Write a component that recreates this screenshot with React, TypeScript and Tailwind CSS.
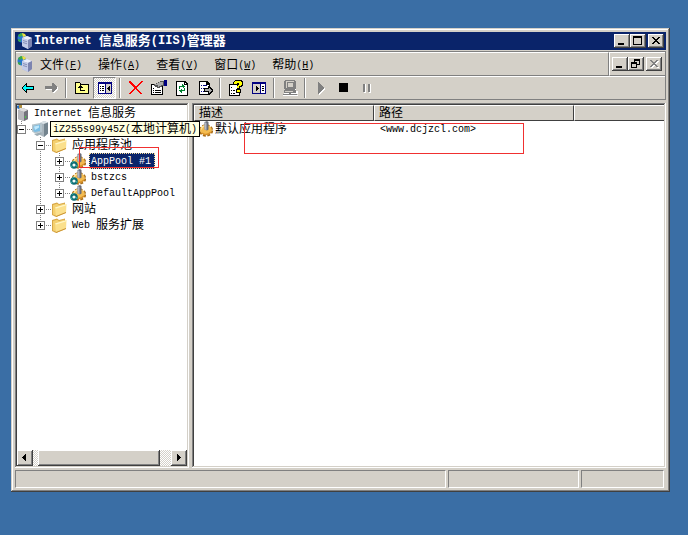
import type { ReactNode } from "react";

const raised =
  "bg-[#d4d0c8] shadow-[inset_-1px_-1px_#404040,inset_1px_1px_#fff,inset_-2px_-2px_#808080]";
const sunken =
  "p-0.5 shadow-[inset_-1px_-1px_#fff,inset_1px_1px_#808080,inset_-2px_-2px_#d4d0c8,inset_2px_2px_#404040]";
const dither =
  "bg-[repeating-conic-gradient(#fff_0_25%,#d4d0c8_0_50%)] bg-[length:2px_2px]";

// Latin runs are set smaller so that they take half the width of a CJK glyph
function Label({ text, bold = false }: { text: string; bold?: boolean }) {
  const cjk = bold
    ? "align-[-1px] text-[13px] leading-none"
    : "align-[-1px] text-[12px] leading-none";
  const latin = bold ? "text-[12px]" : "text-[10px]";
  return (
    <span className="whitespace-pre">
      {text.split(/([\u3000-\u9fff]+)/).map((part, i) =>
        part ? (
          <span key={i} className={i % 2 ? cjk : latin}>
            {part}
          </span>
        ) : null,
      )}
    </span>
  );
}

function Icon({ children, smooth = false }: { children: ReactNode; smooth?: boolean }) {
  return (
    <svg
      width="16"
      height="16"
      viewBox="0 0 16 16"
      className="block shrink-0"
      shapeRendering={smooth ? "auto" : "crispEdges"}
      aria-hidden="true"
    >
      {children}
    </svg>
  );
}

function ServerIcon() {
  return (
    <Icon smooth>
      <circle cx="5" cy="5" r="4.5" fill="#2878d0" />
      <path d="M1 2l3-2 3 1-2 2-3 1zM1 6l3 1-1 2-2-1z" fill="#38a848" />
      <path d="M5 0l3 1 1 2-3 1z" fill="#f0e040" />
      <path d="M5 5l5-2 5 2v8l-4 3-6-3z" fill="#a8b0d0" />
      <path d="M5 5l5-2 5 2-4 2z" fill="#eceffc" />
      <path d="M5 5l6 2v9l-6-3z" fill="#c4cce8" />
      <path d="M11 7l4-2v8l-4 3z" fill="#7c84b0" />
      <path d="M6 7l4 1.300v1L6 8zM6 9l4 1.300v1L6 10z" fill="#8890b8" />
    </Icon>
  );
}

function RootIcon() {
  return (
    <Icon smooth>
      <path d="M5 5l5-2 5 2v9l-4 2-6-2z" fill="#989898" />
      <path d="M5 5l5-2 5 2-4 2z" fill="#dcdcdc" />
      <path d="M5 5l6 2v9l-6-2z" fill="#b8b8bc" />
      <path d="M11 7l4-2v9l-4 2z" fill="#74747c" />
      <path d="M3 1l4-1 1 3-3 1z" fill="#2870c0" />
      <path d="M6 0h3v3H6z" fill="#b09040" />
      <path d="M12 11h1v2h-1z" fill="#4c4" />
    </Icon>
  );
}

function ComputerIcon() {
  return (
    <Icon smooth>
      <path d="M8 2l4-2 4 1.500v11L12 16l-4-2z" fill="#a8b4bc" />
      <path d="M8 2l4-2 4 1.500L12 3z" fill="#dce4e8" />
      <path d="M12 3l4-1.500v11L12 16z" fill="#74848e" />
      <path d="M0 3.500L8 2l2 1v8l-7 1.500-3-2z" fill="#b4c4cc" />
      <path d="M1.500 5L8 3.500v6.500L3 11l-1.500-1z" fill="#78bce4" />
      <path d="M2 5.500l5-1v2L3 9z" fill="#c0e8fc" />
      <path d="M2 13l6-1.500 2 1.500-5 2z" fill="#9cacb4" />
    </Icon>
  );
}

function FolderIcon() {
  return (
    <Icon smooth>
      <path d="M1 3l5-1.500L8 3l6-1.500V12l-9 4-4-2z" fill="#d8a848" />
      <path d="M2 4l4-1.200L8 4l5-1.200V11l-8 3.500-3-1z" fill="#f4d070" />
      <path d="M4 6.500L15.500 3 15 12l-10 4z" fill="#fbe08c" />
      <path d="M4 6.500L15.500 3v1.200L5 7.500z" fill="#fff6c8" />
      <path d="M5 15l10-4v1L5 16z" fill="#c89030" />
    </Icon>
  );
}

function Gear() {
  return (
    <>
      <ellipse
        cx="8"
        cy="9.500"
        rx="5.600"
        ry="4.600"
        fill="#f0b448"
        stroke="#a86c18"
        strokeWidth="3.200"
        strokeDasharray="2.600 1.400"
      />
      <ellipse cx="8" cy="9" rx="5.800" ry="4.800" fill="#f4bc50" />
      <path d="M3 8.500q1.500-4 5-3.800" fill="none" stroke="#ffe098" strokeWidth="1.500" />
      <path d="M4 12q4 3.500 9-1" fill="none" stroke="#d89028" strokeWidth="1.500" />
      <path d="M6.500 1L9 0l1.500 1v7.500L9 9.500l-2.500-1z" fill="#686c78" />
      <path d="M6.500 1L8.500 2v7l-2-.5z" fill="#b4b8c4" />
    </>
  );
}

function GearIcon() {
  return (
    <Icon smooth>
      <Gear />
    </Icon>
  );
}

function PoolIcon() {
  return (
    <Icon smooth>
      <g transform="translate(1 0)">
        <Gear />
      </g>
      <circle cx="4" cy="12" r="2.700" fill="#f4fcf8" stroke="#0c6c74" strokeWidth="2.200" />
      <path d="M2 9.500l2-1.500M6.500 12l.5 2M2 14.500l-1-2" stroke="#38b0a4" />
    </Icon>
  );
}

const toolIcons: Record<string, ReactNode> = {
  后退: (
    <>
      <path d="M2 8l5-4v3h7v3H7v3z" fill="#0ff" />
      <path
        d="M6 3h1v3h7v1H6V5H5V4h1zM4 5h1v1H4zM3 6h1v1H3zM2 7h1v1H2zM2 8h1v1H2zM3 9h1v1H3zM4 10h1v1H4zM5 11h1v1H5zM6 9h8v1H7v3H6zM13 7h1v2h-1z"
        fill="#000"
      />
    </>
  ),
  前进: (
    <>
      <path d="M3 7h7V4h1l4 4v1l-4 4h-1v-3H3z" fill="#fff" />
      <path d="M2 6h7V3h1l4 4v1l-4 4H9V9H2z" fill="#808080" />
    </>
  ),
  向上: (
    <>
      <path d="M1 2h5v1h1v1h8v10H1z" fill="#000" />
      <path d="M2 3h4v2h8v8H2z" fill="#ffff8c" />
      <path d="M6 5h1v1h1v1h1v1H7v2h4v1H6V8H4V7h1V6h1z" fill="#000" />
    </>
  ),
  "显示/隐藏控制台树": (
    <>
      <path d="M1 2h14v12H1z" fill="#000080" />
      <path d="M2 4h6v9H2z" fill="#fff" />
      <path d="M9 4h5v9H9z" fill="#d4d0c8" />
      <path d="M3 6h1v1H3zM5 6h2v1H5zM3 8h1v1H3zM5 8h2v1H5zM3 10h1v1H3zM5 10h2v1H5z" fill="#000" />
      <path d="M12 6h1v5h-1v-1h-1V9h-1V8h1V7h1z" fill="#000" />
    </>
  ),
  删除: (
    <path
      d="M1 1h2v1h1v1h1v1h1v1h1v1h2V5h1V4h1V3h1V2h1V1h2v1h-1v1h-1v1h-1v1h-1v1h-1v1H9v2h1v1h1v1h1v1h1v1h1v1h-2v-1h-1v-1h-1v-1H9v-1H8V9H7v1H6v1H5v1H4v1H3v1H1v-1h1v-1h1v-1h1v-1h1V9h1V7H5V6H4V5H3V4H2V3H1z"
      fill="#f00"
    />
  ),
  属性: (
    <>
      <path d="M0 4h12v11H0z" fill="#000" />
      <path d="M1 5h10v9H1z" fill="#fff" />
      <path d="M2 8h1v1H2zM2 10h1v1H2zM2 12h1v1H2zM4 10h6v1H4zM4 12h6v1H4z" fill="#000" />
      <path d="M3 4h2V3h2V2h2V1h4v5h-2v1H9v1H6V7H4V6H3z" fill="#555" />
      <path d="M4 4h2V3h2V2h4v3h-2v1H8v1H7V5H4z" fill="#aaa" />
      <path d="M13 0h3v6h-3z" fill="#000080" />
    </>
  ),
  刷新: (
    <>
      <path d="M2 1h9l3 3v12H2z" fill="#000" />
      <path d="M3 2h7v3h3v10H3z" fill="#fff" />
      <path d="M11 3h1v1h-1z" fill="#fff" />
      <path
        d="M8 4h1v1h1v1h1v1h-1v1H9V7H6v2H5V6h3zM7 9h1v1h2V8h1v3H8v2H7v-1H6v-1H5v-1h2z"
        fill="#008030"
      />
    </>
  ),
  导出列表: (
    <>
      <path d="M2 1h8l3 3v11H2z" fill="#000" />
      <path d="M3 2h6v3h3v9H3z" fill="#fff" />
      <path d="M4 5h1v1H4zM4 8h1v1H4zM4 11h1v1H4zM6 5h4v1H6zM6 8h2v1H6zM6 11h2v1H6z" fill="#000080" />
      <path d="M7 8h4V6h1l4 4v1l-4 4h-1v-3H7z" fill="#000" />
      <path d="M8 9h4V8l3 2-3 3v-2H8z" fill="#aaa" />
    </>
  ),
  帮助: (
    <>
      <path d="M1 4h11v12H1z" fill="#000" />
      <path d="M2 5h9v10H2z" fill="#fff" />
      <path d="M3 7h1v1H3zM3 10h1v1H3zM3 13h1v1H3zM5 10h2v1H5zM5 13h2v1H5z" fill="#000" />
      <path d="M7 0h7v1h1v5h-1v1h-2v2h1v4H8V9h1V5h1V4H9v1H5V2h1V1h1z" fill="#000" />
      <path d="M7 1h6v1h1v3h-1v1h-2v2H9V6h1V5h1V3H9v1H6V2h1zM9 10h3v2H9z" fill="#ff0" />
    </>
  ),
  "显示/隐藏操作窗格": (
    <>
      <path d="M1 2h14v12H1z" fill="#000080" />
      <path d="M2 4h7v9H2z" fill="#d4d0c8" />
      <path d="M10 4h4v9h-4z" fill="#fff" />
      <path d="M11 6h2v1h-2zM11 8h2v1h-2zM11 10h2v1h-2z" fill="#000" />
      <path d="M5 6h1v1h1v1h1v1H7v1H6v1H5z" fill="#000" />
    </>
  ),
  连接: (
    <>
      <path d="M4 1h10v9H4zM2 11h14v3h-4v1h4v1H1v-1h6v-1H2z" fill="#fff" />
      <path d="M3 0h10v1h1v8h-1v1h1v3H9v1h6v1H1v-1h6v-1H2v-3h1V9H2V1h1z" fill="#808080" />
      <path d="M4 1h8v1H4zM4 2h1v6H4zM6 3h5v4H6zM3 11h8v1H3z" fill="#d4d0c8" />
    </>
  ),
  启动: (
    <>
      <path d="M6 3l6 6-6 6z" fill="#fff" />
      <path d="M5 2h1v1h1v1h1v1h1v1h1v1h1v2h-1v1H9v1H8v1H7v1H6v1H5z" fill="#808080" />
    </>
  ),
  停止: <path d="M3 3h9v9H3z" fill="#000" />,
  暂停: (
    <>
      <path d="M5 4h2v9H5zM10 4h2v9h-2z" fill="#fff" />
      <path d="M4 4h2v8H4zM9 4h2v8H9z" fill="#808080" />
    </>
  ),
};

const toolGroups = [
  ["后退", "前进"],
  ["向上", "显示/隐藏控制台树"],
  ["删除", "属性", "刷新", "导出列表"],
  ["帮助", "显示/隐藏操作窗格"],
  ["连接"],
  ["启动", "停止", "暂停"],
];

function Toolbar() {
  return (
    <div className="flex h-6 items-center border-y border-t-white border-b-[#808080]">
      {toolGroups.map((group, i) => (
        <div key={i} className="flex items-center">
          {i > 0 && (
            <div className="mx-[3px] h-5 w-0.5 border-l border-r border-l-[#808080] border-r-white" />
          )}
          {group.map((name) => (
            <button
              key={name}
              aria-label={name}
              className={
                name === "显示/隐藏控制台树"
                  ? `flex h-[22px] w-[23px] items-center justify-center border border-t-[#808080] border-r-white border-b-white border-l-[#808080] ${dither}`
                  : "flex h-[22px] w-[23px] items-center justify-center"
              }
            >
              <Icon>{toolIcons[name]}</Icon>
            </button>
          ))}
        </div>
      ))}
    </div>
  );
}

const captionGlyphs = {
  最小化: <path d="M4 9h6v2H4z" fill="#000" />,
  最大化: <path d="M3 2h9v9H3zM4 4v6h7V4z" fill="#000" fillRule="evenodd" />,
  还原: (
    <path
      d="M6 2h6v6H9v3H3V5h3zM7 4v1h2v2h2V4zM4 7v3h4V7z"
      fill="#000"
      fillRule="evenodd"
    />
  ),
  关闭: (
    <path
      d="M4 3h2v1h1v1h2V4h1V3h2v1h-1v1h-1v1H9v1h1v1h1v1h1v1h-2V9H9V8H7v1H6v1H4V9h1V8h1V7h1V6H6V5H5V4H4z"
      fill="currentColor"
    />
  ),
};

function CaptionButton({
  name,
  disabled = false,
}: {
  name: keyof typeof captionGlyphs;
  disabled?: boolean;
}) {
  return (
    <button
      aria-label={name}
      disabled={disabled}
      className={`h-3.5 w-4 text-black disabled:text-[#808080] ${raised}`}
    >
      <svg width="16" height="14" viewBox="0 0 16 14" shapeRendering="crispEdges" className="block">
        {disabled && (
          <g transform="translate(1 1)" className="text-white">
            {captionGlyphs[name]}
          </g>
        )}
        {captionGlyphs[name]}
      </svg>
    </button>
  );
}

const menus = [
  ["文件", "F"],
  ["操作", "A"],
  ["查看", "V"],
  ["窗口", "W"],
  ["帮助", "H"],
];

function MenuBar() {
  return (
    <div className="flex h-[25px] border-t border-t-[#808080]">
      <div className="flex flex-1 items-center border-t border-r border-t-white border-r-[#808080] border-b border-b-[#808080] pl-px">
        <ServerIcon />
        <nav className="flex gap-4 pt-px pl-[7px]">
          {menus.map(([name, key]) => (
            <button key={key} className="h-4">
              <Label text={name} />
              <span className="text-[10px]">
                (<u>{key}</u>)
              </span>
            </button>
          ))}
        </nav>
      </div>
      <div className="flex items-center border-t border-b border-l border-t-white border-b-[#808080] border-l-white pr-[3px] pl-0.5">
        <CaptionButton name="最小化" />
        <CaptionButton name="还原" />
        <div className="w-0.5" />
        <CaptionButton name="关闭" disabled />
      </div>
    </div>
  );
}

// Dotted connector cell: a through line, a branch, and the expander box on it
function Branch({ node, last }: { node?: "+" | "-"; last?: boolean }) {
  return (
    <svg width="19" height="16" className="block shrink-0" shapeRendering="crispEdges">
      <path
        d={last ? "M8.5 0V8" : "M8.5 0V16"}
        stroke="#808080"
        strokeDasharray="1 1"
      />
      {node && (
        <>
          <path d="M8 8.5H19" stroke="#808080" strokeDasharray="1 1" />
          <rect x="4.5" y="4.5" width="8" height="8" fill="#fff" stroke="#808080" />
          <path d={node === "+" ? "M6 8.5h5M8.5 6v5" : "M6 8.5h5"} stroke="#000" />
        </>
      )}
    </svg>
  );
}

function TreeRow({
  branches,
  icon,
  text,
  variant = "plain",
}: {
  branches?: ReactNode;
  icon: ReactNode;
  text: string;
  variant?: "plain" | "selected" | "tip";
}) {
  const styles = {
    plain: "ml-[3px] h-4 px-0.5",
    selected:
      "ml-[3px] h-4 bg-[#0a246a] pr-1 pl-0.5 text-white outline-1 -outline-offset-1 outline-dotted outline-[#f5db95]",
    tip: "z-10 ml-0.5 h-4 w-[150px] shrink-0 border border-black bg-[#ffffe1] pl-0.5 leading-[14px]",
  };
  return (
    <li className="flex h-4 items-center">
      {branches}
      {icon}
      <span className={styles[variant]}>
        <Label text={text} />
      </span>
    </li>
  );
}

function Tree() {
  const gap = <div className="w-[19px] shrink-0" />;
  const pool = (last = false) => (
    <>
      {gap}
      <Branch />
      <Branch node="+" last={last} />
    </>
  );
  return (
    <div className="relative flex-1">
      {/* only the left edge clips, the name tip runs out over the splitter */}
      <ul className="-ml-1 [clip-path:inset(0_-20px_0_4px)]">
        <TreeRow icon={<RootIcon />} text="Internet 信息服务" />
        <TreeRow
          branches={<Branch node="-" last />}
          icon={<ComputerIcon />}
          text="iZ255s99y45Z(本地计算机)"
          variant="tip"
        />
        <TreeRow
          branches={<>{gap}<Branch node="-" /></>}
          icon={<FolderIcon />}
          text="应用程序池"
        />
        <TreeRow branches={pool()} icon={<PoolIcon />} text="AppPool #1" variant="selected" />
        <TreeRow branches={pool()} icon={<PoolIcon />} text="bstzcs" />
        <TreeRow branches={pool(true)} icon={<PoolIcon />} text="DefaultAppPool" />
        <TreeRow
          branches={<>{gap}<Branch node="+" /></>}
          icon={<FolderIcon />}
          text="网站"
        />
        <TreeRow
          branches={<>{gap}<Branch node="+" last /></>}
          icon={<FolderIcon />}
          text="Web 服务扩展"
        />
      </ul>
      <div className="absolute top-[42px] left-[62px] h-[21px] w-20 border border-[#f03030]" />
    </div>
  );
}

function ScrollBar() {
  return (
    <div className={`flex h-4 ${dither}`}>
      <button aria-label="向左滚动" className={`w-4 ${raised}`}>
        <Icon>
          <path d="M9 4v7H8v-1H7V9H6V8H5V7h1V6h1V5h1V4z" fill="#000" />
        </Icon>
      </button>
      <div className={`mr-[11px] ml-[5px] flex-1 ${raised}`} />
      <button aria-label="向右滚动" className={`w-4 ${raised}`}>
        <Icon>
          <path d="M6 4h1v1h1v1h1v1h1v1H9v1H8v1H7v1H6z" fill="#000" />
        </Icon>
      </button>
    </div>
  );
}

function ListView() {
  const th =
    "border-t border-l border-r border-b border-t-white border-l-white border-r-[#404040] border-b-[#404040] p-0 pl-1 text-left font-normal";
  return (
    <div className={`relative min-w-0 flex-1 bg-white ${sunken}`}>
      <table className="w-full table-fixed border-separate border-spacing-0">
        <thead className="bg-[#d4d0c8]">
          <tr className="leading-[14px]">
            <th className={`w-[180px] ${th}`}>
              <div className="h-3.5">
                <Label text="描述" />
              </div>
            </th>
            <th className={`w-[200px] ${th}`}>
              <div className="h-3.5">
                <Label text="路径" />
              </div>
            </th>
            <th className="border-t border-b border-l border-t-white border-b-[#404040] border-l-white p-0" />
          </tr>
        </thead>
        <tbody>
          <tr>
            <td className="p-0 pl-1">
              <div className="flex h-4 items-center gap-px">
                <GearIcon />
                <Label text="默认应用程序" />
              </div>
            </td>
            <td className="p-0 pl-1.5">
              <div className="h-4">
                <Label text="<www.dcjzcl.com>" />
              </div>
            </td>
            <td className="p-0" />
          </tr>
        </tbody>
      </table>
      <div className="absolute top-5 left-[52px] h-[31px] w-[280px] border border-[#f03030]" />
    </div>
  );
}

export default function App() {
  const statusCell =
    "border border-t-[#808080] border-r-white border-b-white border-l-[#808080]";
  return (
    <div className="flex min-h-screen flex-col bg-[#3a6ea5] pt-7 pr-[18px] pb-[43px] pl-[11px] font-['Liberation_Mono','Noto_Sans_CJK_SC',monospace] text-[12px] leading-4 text-black">
      <main className="flex flex-1 flex-col bg-[#d4d0c8] p-1 shadow-[inset_-1px_-1px_#404040,inset_1px_1px_#d4d0c8,inset_-2px_-2px_#808080,inset_2px_2px_#fff]">
        <header className="mb-px flex h-[18px] items-center bg-[#0a246a] pr-0.5 pl-0.5 text-white">
          <ServerIcon />
          <h1 className="h-4 flex-1 pl-px font-bold">
            <Label text="Internet 信息服务(IIS)管理器" bold />
          </h1>
          <CaptionButton name="最小化" />
          <CaptionButton name="最大化" />
          <div className="w-0.5" />
          <CaptionButton name="关闭" />
        </header>
        <div className="border-x border-l-[#808080] border-r-[#808080]">
          <MenuBar />
          <Toolbar />
        </div>
        <div className="mt-[3px] flex flex-1 gap-[3px]">
          <section className={`z-10 flex w-[174px] flex-col bg-white ${sunken}`}>
            <Tree />
            <ScrollBar />
          </section>
          <ListView />
        </div>
        <footer className="mt-0.5 flex h-[18px] gap-0.5 pr-0.5">
          <div className={`flex-1 ${statusCell}`} />
          <div className={`w-[131px] ${statusCell}`} />
          <div className={`w-[83px] ${statusCell}`} />
        </footer>
      </main>
    </div>
  );
}
